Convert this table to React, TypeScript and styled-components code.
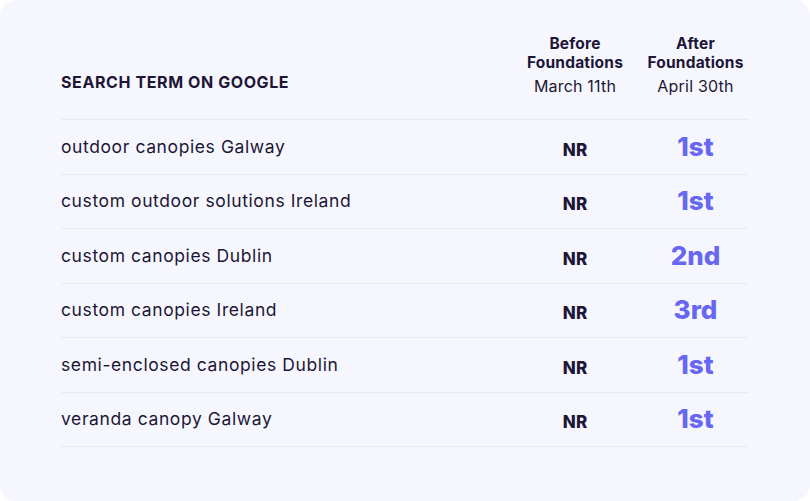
import { FC } from "react";
import styled, { createGlobalStyle } from "styled-components";

type Ranking = {
	term: string;
	before: string;
	after: string;
};

const rankings: Ranking[] = [
	{ term: "outdoor canopies Galway", before: "NR", after: "1st" },
	{ term: "custom outdoor solutions Ireland", before: "NR", after: "1st" },
	{ term: "custom canopies Dublin", before: "NR", after: "2nd" },
	{ term: "custom canopies Ireland", before: "NR", after: "3rd" },
	{ term: "semi-enclosed canopies Dublin", before: "NR", after: "1st" },
	{ term: "veranda canopy Galway", before: "NR", after: "1st" },
];

const App: FC = () => {
	return (
		<>
			<GlobalStyle />
			<Card>
				<HeaderRow>
					<TermHeading>Search term on Google</TermHeading>
					<PeriodHeading>
						<PeriodTitle>Before Foundations</PeriodTitle>
						<PeriodDate>March 11th</PeriodDate>
					</PeriodHeading>
					<PeriodHeading>
						<PeriodTitle>After Foundations</PeriodTitle>
						<PeriodDate>April 30th</PeriodDate>
					</PeriodHeading>
				</HeaderRow>
				<Rows>
					{rankings.map((ranking) => (
						<Row key={ranking.term}>
							<Term>{ranking.term}</Term>
							<Before>{ranking.before}</Before>
							<After>{ranking.after}</After>
						</Row>
					))}
				</Rows>
			</Card>
		</>
	);
};

const GlobalStyle = createGlobalStyle`
	html, body {
		margin: 0;
		padding: 0;
		background: #ffffff;
	}

	body {
		font-family: Inter, "Noto Sans", sans-serif;
		color: #1d1637;
	}
`;

const Card = styled.div`
	box-sizing: border-box;
	width: 810px;
	height: 501px;
	padding: 34px 62px 0 61px;
	background-color: #f6f7fe;
	border-radius: 16px;
`;

const grid = `
	display: grid;
	grid-template-columns: 1fr 136px 105px;
`;

const HeaderRow = styled.div`
	${grid}
	align-items: end;
	padding-bottom: 21px;
`;

const TermHeading = styled.h2`
	margin: 0 0 6px;
	font-size: 16px;
	line-height: 19px;
	font-weight: 700;
	letter-spacing: 0.6px;
	text-transform: uppercase;
`;

const PeriodHeading = styled.div`
	display: flex;
	flex-direction: column;
	align-items: center;
	text-align: center;
`;

const PeriodTitle = styled.div`
	width: 104px;
	font-size: 15.5px;
	line-height: 19px;
	font-weight: 700;
	letter-spacing: 0.2px;
`;

const PeriodDate = styled.div`
	margin-top: 2px;
	font-size: 16px;
	line-height: 24px;
	font-weight: 400;
	letter-spacing: 0.2px;
`;

const Rows = styled.div`
	display: flex;
	flex-direction: column;
	border-bottom: 1px solid #e7e8f8;
`;

const Row = styled.div`
	${grid}
	box-sizing: border-box;
	height: 54.5px;
	align-items: center;
	border-top: 1px solid #e7e8f8;
`;

const Term = styled.div`
	font-size: 17.5px;
	line-height: 24px;
	letter-spacing: 0.6px;
`;

const Before = styled.div`
	padding-top: 6px;
	font-size: 17px;
	line-height: 30px;
	font-weight: 800;
	text-align: center;
`;

const After = styled.div`
	font-size: 26px;
	line-height: 30px;
	font-weight: 800;
	color: #6767f2;
	text-align: center;
`;

export default App;
